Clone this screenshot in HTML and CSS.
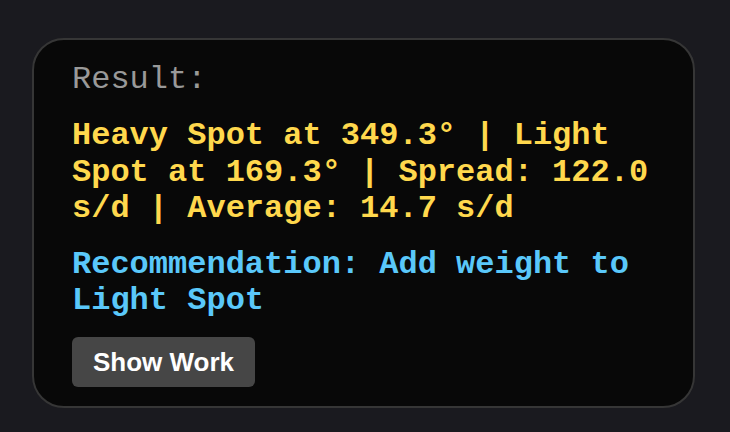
FILE: index.html
```html
<!DOCTYPE html>
<html>
<head>
<meta charset="utf-8">
<link rel="stylesheet" href="styles.css">
</head>
<body>
<div class="page">
  <div class="card">
    <div class="label">Result:</div>
    <p class="result">Heavy Spot at 349.3° | Light Spot at 169.3° | Spread: 122.0 s/d | Average: 14.7 s/d</p>
    <p class="rec">Recommendation: Add weight to Light Spot</p>
    <button class="btn">Show Work</button>
  </div>
</div>
</body>
</html>
```
FILE: styles.css
```css
html, body {
  margin: 0;
  padding: 0;
  background: #1a1a1f;
}
.page {
  padding: 38px 35px 25px 32px;
}
.card {
  box-sizing: border-box;
  width: 663px;
  background: #080808;
  border: 2px solid #363636;
  border-radius: 32px;
  padding: 22px 38px 19px 38px;
  display: flex;
  flex-direction: column;
  align-items: flex-start;
  gap: 20px;
  font-family: "Liberation Mono", "Courier New", monospace;
  font-size: 32px;
  line-height: 36.3px;
}
.label {
  color: #999999;
}
.result {
  margin: 0;
  color: #ffd84d;
  font-weight: bold;
}
.rec {
  margin: 0;
  color: #5ac8fa;
  font-weight: bold;
}
.btn {
  font-family: "Liberation Sans", Arial, sans-serif;
  font-weight: bold;
  font-size: 26px;
  line-height: 30px;
  color: #ffffff;
  background: #464646;
  border: none;
  border-radius: 6px;
  padding: 10px 21px;
  margin-top: -3px;
}
```
